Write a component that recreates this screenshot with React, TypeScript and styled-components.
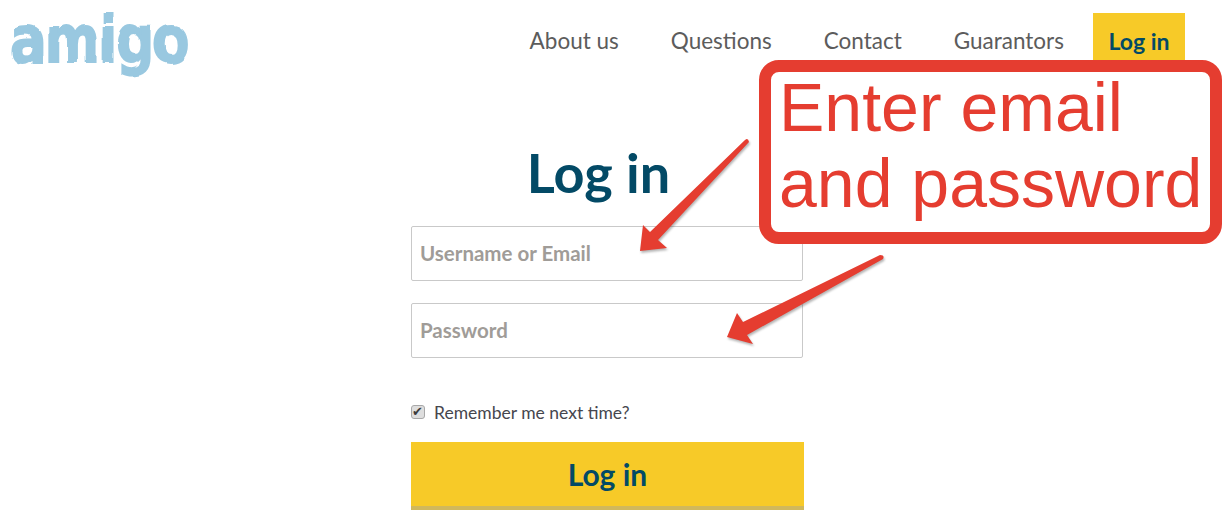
import styled, { createGlobalStyle } from "styled-components";

const GlobalStyle = createGlobalStyle`
  html, body {
    margin: 0;
    padding: 0;
    background: #fff;
    overflow: hidden;
  }
  * {
    box-sizing: border-box;
  }
`;

const Page = styled.div`
  position: relative;
  width: 1228px;
  height: 513px;
  font-family: Lato, "Liberation Sans", sans-serif;
  overflow: hidden;
`;

const Header = styled.header`
  display: flex;
  justify-content: space-between;
  align-items: flex-start;
  height: 148px;
  padding: 13px 43px 0 10px;
`;

const Logo = styled.div`
  margin-top: -19px;
  font-family: "DejaVu Sans", sans-serif;
  font-weight: 700;
  font-size: 53px;
  line-height: 76px;
  letter-spacing: -1px;
  color: #99c8e0;
  -webkit-text-stroke: 1.5px #99c8e0;
  transform: scaleY(1.22);
  transform-origin: top left;
  filter: url(#brush);
`;

const FilterDefs = styled.svg`
  position: absolute;
  width: 0;
  height: 0;
`;

const Nav = styled.nav`
  display: flex;
  align-items: flex-start;
  gap: 22px;
`;

const NavLink = styled.a<{ $active?: boolean }>`
  display: block;
  height: 55px;
  margin-left: ${(p) => (p.$active ? "-8px" : "0")};
  padding: 14px ${(p) => (p.$active ? "15.5px" : "15px")} 0;
  font-size: ${(p) => (p.$active ? "23px" : "22.5px")};
  line-height: 28px;
  font-weight: ${(p) => (p.$active ? 700 : 400)};
  color: ${(p) => (p.$active ? "#034a66" : "#5c5c5c")};
  background: ${(p) => (p.$active ? "#f7ca28" : "transparent")};
`;

const Main = styled.main`
  width: 393px;
  margin-left: 411px;
`;

const Title = styled.h1`
  margin: 0 18px 21px 0;
  height: 57px;
  text-align: center;
  font-size: 54px;
  line-height: 50px;
  font-weight: 700;
  color: #034a66;
`;

const Input = styled.input`
  display: block;
  width: 392px;
  height: 55px;
  margin-bottom: 22px;
  padding: 0 8px 2px;
  border: 1px solid #c9c9c9;
  border-radius: 2px;
  outline: none;
  background: #fff;
  font-family: inherit;
  font-size: 20.5px;
  font-weight: 700;

  &::placeholder {
    color: #a09c98;
    opacity: 1;
  }
`;

const Remember = styled.label`
  display: flex;
  align-items: center;
  gap: 9px;
  margin: 43px 0 19px;
  height: 22px;
  font-size: 17.5px;
  color: #46464e;
`;

const Check = styled.input`
  appearance: none;
  position: relative;
  width: 14px;
  height: 14px;
  margin: 0;
  border: 1px solid #a8a8a8;
  border-radius: 3px;
  background: #dedede;

  &::after {
    content: "✔";
    position: absolute;
    left: 0;
    top: -1px;
    font-family: "DejaVu Sans", sans-serif;
    font-size: 13px;
    line-height: 14px;
    color: #3c3c3c;
  }
`;

const Submit = styled.button`
  display: block;
  width: 393px;
  height: 68px;
  padding: 0;
  border: 0;
  border-bottom: 4px solid #d0b85c;
  background: #f7ca28;
  color: #034a66;
  font-family: inherit;
  font-size: 30px;
  font-weight: 700;
`;

const Callout = styled.div`
  position: absolute;
  left: 759px;
  top: 60px;
  width: 463px;
  height: 184px;
  padding-left: 8px;
  border: 12px solid #e53d30;
  border-radius: 20px;
  background: #fff;
  color: #e53d30;
  font-family: "Liberation Sans", Arial, sans-serif;
  font-size: 68px;
  line-height: 76px;
  white-space: nowrap;
`;

const CalloutText = styled.div`
  margin-top: -3px;
`;

const Arrows = styled.svg`
  position: absolute;
  left: 0;
  top: 0;
  pointer-events: none;
  filter: drop-shadow(1px 2px 1px rgba(90, 90, 90, 0.45));
`;

export default function App() {
  return (
    <Page>
      <GlobalStyle />
      <FilterDefs aria-hidden="true">
        <filter id="brush" x="-5%" y="-5%" width="110%" height="110%">
          <feTurbulence type="fractalNoise" baseFrequency="0.05" numOctaves="1" seed="4" />
          <feDisplacementMap in="SourceGraphic" scale="5" />
        </filter>
      </FilterDefs>
      <Header>
        <Logo>amigo</Logo>
        <Nav>
          <NavLink>About us</NavLink>
          <NavLink>Questions</NavLink>
          <NavLink>Contact</NavLink>
          <NavLink>Guarantors</NavLink>
          <NavLink $active>Log in</NavLink>
        </Nav>
      </Header>
      <Main>
        <Title>Log in</Title>
        <Input type="text" placeholder="Username or Email" />
        <Input type="password" placeholder="Password" />
        <Remember>
          <Check type="checkbox" defaultChecked />
          Remember me next time?
        </Remember>
        <Submit>Log in</Submit>
      </Main>
      <Callout>
        <CalloutText>
          Enter email
          <br />
          and password
        </CalloutText>
      </Callout>
      <Arrows width="1228" height="513" viewBox="0 0 1228 513">
        <path
          d="M745 140 Q748 137 749 142 L658 240 L667 248 L640 251 L643 225 L650 232 Z"
          fill="#e53d30"
        />
        <path
          d="M880 255 Q885 255 883 259 L747 335 L753 344 L727 337 L737 313 L743 322 Z"
          fill="#e53d30"
        />
      </Arrows>
    </Page>
  );
}
